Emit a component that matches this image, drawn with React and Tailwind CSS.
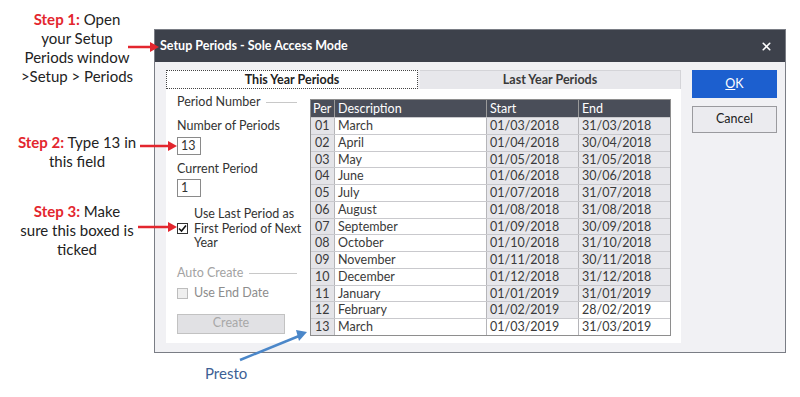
import { X } from 'lucide-react';

const periods = [
  ['01', 'March', '01/03/2018', '31/03/2018'],
  ['02', 'April', '01/04/2018', '30/04/2018'],
  ['03', 'May', '01/05/2018', '31/05/2018'],
  ['04', 'June', '01/06/2018', '30/06/2018'],
  ['05', 'July', '01/07/2018', '31/07/2018'],
  ['06', 'August', '01/08/2018', '31/08/2018'],
  ['07', 'September', '01/09/2018', '30/09/2018'],
  ['08', 'October', '01/10/2018', '31/10/2018'],
  ['09', 'November', '01/11/2018', '30/11/2018'],
  ['10', 'December', '01/12/2018', '31/12/2018'],
  ['11', 'January', '01/01/2019', '31/01/2019'],
  ['12', 'February', '01/02/2019', '28/02/2019'],
  ['13', 'March', '01/03/2019', '31/03/2019'],
];

const Step = ({ n, lines, className }) => (
  <p className={`whitespace-nowrap text-center text-[15px] leading-[19px] text-[#222] ${className}`}>
    <span className="font-bold text-[#e3262e]">Step {n}:</span> {lines[0]}
    {lines.slice(1).map((l) => (
      <span key={l} className="block">{l}</span>
    ))}
  </p>
);

const Arrows = () => (
  <svg className="pointer-events-none absolute inset-0" width="800" height="397">
    <g stroke="#e3262e" strokeWidth="2.5" fill="#e3262e">
      <line x1="128" y1="47" x2="152" y2="47" />
      <polygon points="150,42 159,47 150,52" stroke="none" />
      <line x1="140" y1="146" x2="170" y2="146" />
      <polygon points="168,141 177,146 168,151" stroke="none" />
      <line x1="138" y1="227" x2="170" y2="227" />
      <polygon points="168,222 177,227 168,232" stroke="none" />
    </g>
    <g stroke="#4b87c9" strokeWidth="2.5" fill="#4b87c9">
      <line x1="240" y1="360" x2="299" y2="336" />
      <polygon points="296,330 307,332 299,341" stroke="none" />
    </g>
  </svg>
);

const PeriodTable = () => (
  <div className="mt-[5px] h-fit w-[361px] border border-[#8e8e8e] text-[12.5px] text-[#3a3a3a]">
    <div className="grid h-[17px] grid-cols-[23px_152px_92px_92px] bg-[#4a4e59] leading-[17px] text-white">
      <div className="pl-[2px]">Per</div>
      <div className="border-l border-[#9a9a9a] pl-[3px]">Description</div>
      <div className="border-l border-[#9a9a9a] pl-[3px]">Start</div>
      <div className="border-l border-[#9a9a9a] pl-[3px]">End</div>
    </div>
    {periods.map(([per, desc, start, end], i) => (
      <div
        key={per}
        className="grid h-[16.75px] grid-cols-[23px_152px_92px_92px] border-t border-[#c9c9cd] leading-[15.75px]"
      >
        <div className="bg-[#e4e4e8] pl-[4px]">{per}</div>
        <div className="border-l border-[#b5b5b9] bg-white pl-[3px]">{desc}</div>
        <div className={`border-l border-[#b5b5b9] pl-[3px] ${i === 12 ? 'bg-white' : 'bg-[#e7e7eb]'}`}>{start}</div>
        <div className={`border-l border-[#b5b5b9] pl-[3px] ${i >= 11 ? 'bg-white' : 'bg-[#e7e7eb]'}`}>{end}</div>
      </div>
    ))}
  </div>
);

const LeftControls = () => (
  <div className="flex w-[120px] flex-col text-[12.5px] text-[#333]">
    <div className="flex h-[16px] items-center gap-[6px]">
      <span>Period Number</span>
      <span className="h-px flex-1 bg-[#c8c8c8]" />
    </div>
    <div className="mt-[8px] h-[16px] leading-[16px]">Number of Periods</div>
    <div className="mt-[3px] h-[18px] w-[24px] border border-[#8a8a8a] bg-white pl-[3px] leading-[16px]">13</div>
    <div className="mt-[6px] h-[16px] leading-[16px]">Current Period</div>
    <div className="mt-[2px] h-[18px] w-[24px] border border-[#8a8a8a] bg-white pl-[3px] leading-[16px]">1</div>
    <div className="mt-[10px] flex items-center gap-[6px]">
      <span className="flex h-[11px] w-[11px] shrink-0 items-center justify-center border border-[#333] bg-white">
        <svg width="9" height="9" viewBox="0 0 9 9">
          <path d="M1 4.5 L3.5 7 L8 1.5" fill="none" stroke="#111" strokeWidth="1.6" />
        </svg>
      </span>
      <span className="whitespace-nowrap leading-[14.5px]">
        Use Last Period as
        <br />
        First Period of Next
        <br />
        Year
      </span>
    </div>
    <div className="mt-[15px] flex h-[16px] items-center gap-[6px] text-[#a3a3a3]">
      <span>Auto Create</span>
      <span className="h-px flex-1 bg-[#c8c8c8]" />
    </div>
    <div className="mt-[4px] flex h-[16px] items-center gap-[6px] text-[#8d8d8d]">
      <span className="h-[11px] w-[11px] border border-[#bdbdbd] bg-[#efefef]" />
      <span>Use End Date</span>
    </div>
    <div className="mt-[12px] flex h-[20px] w-[108px] items-center justify-center border border-[#c2c2c2] bg-[#e1e1e4] text-[#a8a8a8]">
      Create
    </div>
  </div>
);

export default function App() {
  return (
    <div
      className="relative flex h-[397px] w-[800px] overflow-hidden bg-white"
      style={{ fontFamily: 'Lato, "Open Sans", sans-serif' }}
    >
      <div className="flex w-[154px] flex-col items-center">
        <Step n={1} className="mt-[10px]" lines={['Open', 'your Setup', 'Periods window', '>Setup > Periods']} />
        <Step n={2} className="mt-[47px]" lines={['Type 13 in', 'this field']} />
        <Step n={3} className="mt-[31px]" lines={['Make', 'sure this boxed is', 'ticked']} />
      </div>

      <div className="flex flex-col">
        <div className="mt-[29px] flex h-[324px] w-[632px] flex-col border border-[#7a7d85] bg-[#f1f1f4]">
          <div className="flex h-[32px] items-center justify-between bg-[#3d414b] pl-[5px] pr-[12px] text-white">
            <span className="text-[12.5px] font-bold">Setup Periods - Sole Access Mode</span>
            <X size={13} strokeWidth={3} />
          </div>
          <div className="flex gap-[11px] pl-[11px] pt-[8px]">
            <div className="flex w-[515px] flex-col">
              <div className="flex h-[19px] text-[12.5px] leading-[17px]">
                <div className="w-[252px] border border-dotted border-[#444] bg-white text-center font-bold text-[#222]">
                  This Year Periods
                </div>
                <div className="ml-[2px] flex-1 border-t border-r border-[#d4d4d8] bg-[#e7e7eb] text-center font-bold text-[#3a3a3a]">
                  Last Year Periods
                </div>
              </div>
              <div className="flex h-[254px] gap-[13px] bg-white pl-[11px] pt-[5px]">
                <LeftControls />
                <PeriodTable />
              </div>
            </div>
            <div className="flex w-[85px] flex-col gap-[8px] text-[12.5px]">
              <div className="flex h-[28px] items-center justify-center bg-[#1c5fcf] text-white">
                <span><span className="underline">O</span>K</span>
              </div>
              <div className="flex h-[27px] items-center justify-center border border-[#9a9a9e] bg-[#ebebef] text-[#222]">
                Cancel
              </div>
            </div>
          </div>
        </div>
        <p className="ml-[51px] mt-[10px] text-[15px] leading-[20px] text-[#3d5f95]">
          Presto
        </p>
      </div>

      <Arrows />
    </div>
  );
}
